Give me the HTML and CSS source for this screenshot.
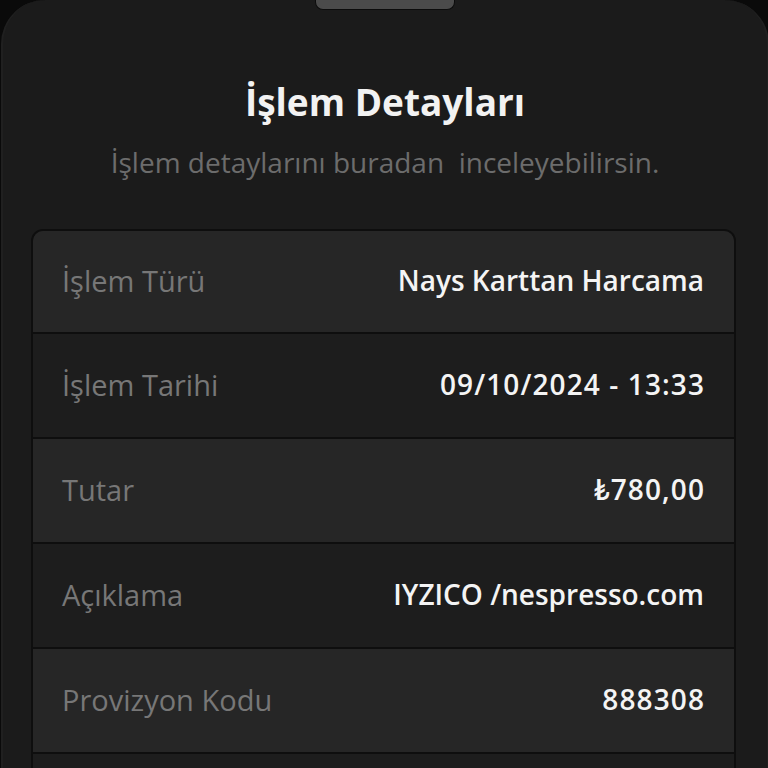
FILE: index.html
```html
<!DOCTYPE html>
<html lang="tr">
<head>
<meta charset="utf-8">
<link rel="stylesheet" href="styles.css">
</head>
<body>
<div class="sheet">
  <div class="handle"></div>
  <h1 class="title">İşlem Detayları</h1>
  <p class="subtitle">İşlem detaylarını buradan&nbsp; inceleyebilirsin.</p>
  <div class="card">
    <div class="row light"><span class="label">İşlem Türü</span><span class="value">Nays Karttan Harcama</span></div>
    <div class="row dark"><span class="label">İşlem Tarihi</span><span class="value num">09/10/2024 - 13:33</span></div>
    <div class="row light"><span class="label">Tutar</span><span class="value num">₺780,00</span></div>
    <div class="row dark"><span class="label">Açıklama</span><span class="value">IYZICO /nespresso.com</span></div>
    <div class="row light"><span class="label">Provizyon Kodu</span><span class="value num">888308</span></div>
    <div class="row dark"><span class="label">&nbsp;</span><span class="value">&nbsp;</span></div>
  </div>
</div>
</body>
</html>
```

FILE: styles.css
```css
html, body {
  margin: 0;
  padding: 0;
  background: #0a0a0a;
  overflow: hidden;
}
body {
  font-family: "Open Sans", Lato, sans-serif;
  width: 768px;
  height: 768px;
}
.sheet {
  box-sizing: border-box;
  width: 768px;
  height: 768px;
  overflow: hidden;
  margin-left: 1px;
  background: #1b1b1b;
  border-radius: 44px 44px 0 0;
  border-left: 2px solid #202020;
  border-right: 2px solid #202020;
  display: flex;
  flex-direction: column;
  align-items: center;
}
.handle {
  flex: none;
  width: 138px;
  height: 9px;
  background: #4b4b4b;
  border: 1px solid #0c0c0c;
  border-top: none;
  border-radius: 0 0 8px 8px;
}
.title {
  margin: 70px 0 0;
  font-size: 37px;
  font-weight: 700;
  color: #f2f2f2;
  line-height: 44px;
}
.subtitle {
  margin: 20px 0 0;
  font-size: 28px;
  font-weight: 400;
  color: #6c6c6c;
  line-height: 36px;
}
.card {
  flex: none;
  box-sizing: border-box;
  width: 705px;
  margin: 49px 0 0 -3px;
  border: 2px solid #0e0e0e;
  border-radius: 12px;
  overflow: hidden;
  display: flex;
  flex-direction: column;
}
.row {
  flex: none;
  box-sizing: border-box;
  height: 105px;
  border-bottom: 2px solid #0e0e0e;
  display: flex;
  align-items: center;
  justify-content: space-between;
  padding: 0 30px 3px 29px;
  font-size: 28px;
}
.row:first-child {
  height: 103px;
}
.row.light { background: #262626; }
.row.dark { background: #1d1d1d; }
.label {
  color: #777777;
  font-weight: 400;
  font-size: 29px;
}
.value {
  color: #f4f4f4;
  font-weight: 600;
}
.value.num {
  letter-spacing: 1.1px;
  margin-right: -1px;
}
```
